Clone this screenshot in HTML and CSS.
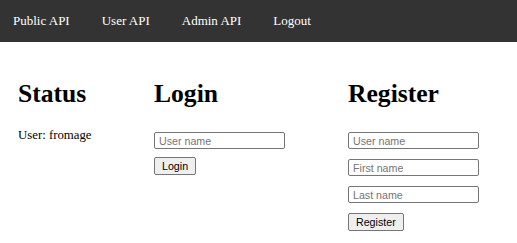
FILE: index.html
```html
<!DOCTYPE html>
<html lang="en">
<head>
  <meta charset="UTF-8">
  <title>API</title>
  <link rel="stylesheet" href="styles.css">
</head>
<body>

  <nav class="topnav">
    <a href="#">Public API</a>
    <a href="#">User API</a>
    <a href="#">Admin API</a>
    <a href="#">Logout</a>
  </nav>

  <main class="columns">
    <section class="col col-status">
      <h1>Status</h1>
      <p class="status-text">User: fromage</p>
    </section>

    <section class="col col-login">
      <h1>Login</h1>
      <form class="form form-login">
        <input type="text" name="username" placeholder="User name">
        <button type="submit">Login</button>
      </form>
    </section>

    <section class="col col-register">
      <h1>Register</h1>
      <form class="form">
        <input type="text" name="username" placeholder="User name">
        <input type="text" name="firstname" placeholder="First name">
        <input type="text" name="lastname" placeholder="Last name">
        <button type="submit">Register</button>
      </form>
    </section>
  </main>

</body>
</html>
```

FILE: styles.css
```css
body {
  margin: 0;
  font-family: "Liberation Serif", "Times New Roman", serif;
  font-size: 12.8px;
  color: #000;
  background: #fff;
}
.topnav {
  display: flex;
  align-items: center;
  gap: 32px;
  height: 42px;
  padding-left: 13px;
  background: #333;
  font-size: 13px;
}
.topnav a {
  color: #fff;
  text-decoration: none;
}
.columns {
  display: flex;
  padding: 37px 0 0 18px;
}
.col-status {
  width: 136px;
}
.col-login {
  width: 194px;
}
h1 {
  margin: 0 0 19px;
  font-size: 25.6px;
  font-weight: bold;
}
.status-text {
  margin: 0;
}
.form {
  display: flex;
  flex-direction: column;
  align-items: flex-start;
  gap: 10px;
  padding-top: 4px;
}
.form-login {
  gap: 8px;
}
input {
  box-sizing: border-box;
  width: 131px;
  height: 17px;
  padding: 0 4px;
  border: 1px solid #767676;
  border-radius: 2px;
  font-family: "Liberation Sans", Arial, sans-serif;
  font-size: 10.67px;
}
input::placeholder {
  color: #757575;
}
button {
  box-sizing: border-box;
  height: 18px;
  padding: 0 7px;
  border: 1px solid #767676;
  border-radius: 2px;
  background: #efefef;
  color: #000;
  font-family: "Liberation Sans", Arial, sans-serif;
  font-size: 10.67px;
}
```
